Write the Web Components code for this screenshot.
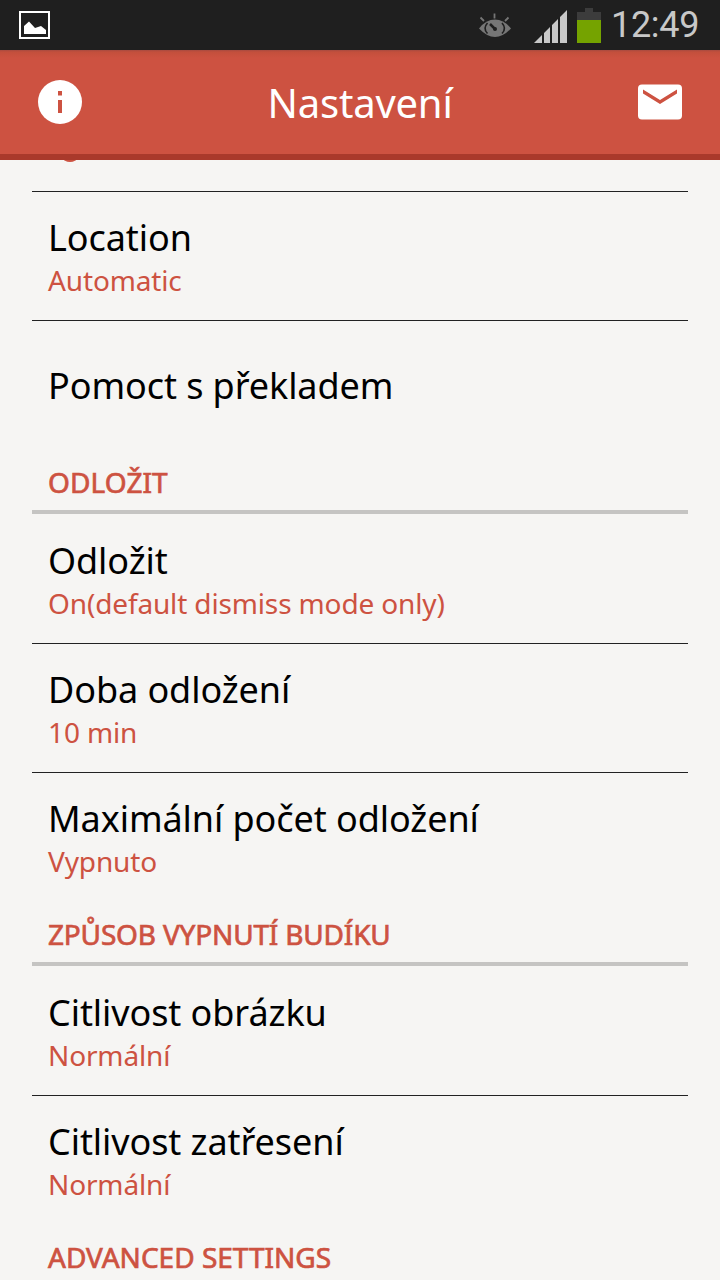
<!DOCTYPE html>
<html lang="cs">
<head>
<meta charset="utf-8">
<title>Nastavení</title>
<style>
  body {
    margin: 0;
    width: 720px;
    height: 1280px;
    overflow: hidden;
    background: #f6f5f3;
    font-family: "Noto Sans", "Open Sans", sans-serif;
  }
</style>
</head>
<body>
<settings-screen>
  <status-bar slot="status" time="12:49"></status-bar>
  <action-bar slot="bar">Nastavení</action-bar>
  <setting-item class="scrolled"></setting-item>
  <setting-item summary="Automatic">Location</setting-item>
  <setting-item last>Pomoct s překladem</setting-item>
  <section-title style="letter-spacing: 0.1px">ODLOŽIT</section-title>
  <setting-item summary="On(default dismiss mode only)">Odložit</setting-item>
  <setting-item summary="10 min">Doba odložení</setting-item>
  <setting-item summary="Vypnuto" last>Maximální počet odložení</setting-item>
  <section-title style="letter-spacing: -0.17px">ZPŮSOB VYPNUTÍ BUDÍKU</section-title>
  <setting-item summary="Normální">Citlivost obrázku</setting-item>
  <setting-item summary="Normální" last>Citlivost zatřesení</setting-item>
  <section-title>ADVANCED SETTINGS</section-title>
</settings-screen>

<script>
class SettingsScreen extends HTMLElement {
  constructor() {
    super();
    this.attachShadow({ mode: "open" });
    this.shadowRoot.innerHTML = `
      <style>
        :host {
          display: flex;
          flex-direction: column;
          height: 1280px;
        }

        .list {
          flex: 1;
          min-height: 0;
          overflow: hidden;
          padding: 0 32px;
        }

        /* the first row is scrolled almost out of view */
        ::slotted(.scrolled) {
          height: 31px;
        }

        .list::before {
          content: "";
          display: block;
          width: 14px;
          height: 8px;
          margin: -6px 0 -2px 31px;
          border-radius: 50%;
          background: #cd5241;
        }
      </style>
      <slot name="status"></slot>
      <slot name="bar"></slot>
      <div class="list"><slot></slot></div>
    `;
  }
}

class StatusBar extends HTMLElement {
  constructor() {
    super();
    this.attachShadow({ mode: "open" });
    this.shadowRoot.innerHTML = `
      <style>
        :host {
          display: flex;
          flex: none;
          align-items: center;
          box-sizing: border-box;
          height: 50px;
          padding: 0 20px 0 18px;
          background: #1f1f1f;
          color: #c8c8c8;
        }

        svg {
          display: block;
          flex: none;
        }

        .right {
          display: flex;
          align-items: center;
          margin-left: auto;
        }

        .signal {
          margin-left: 22px;
        }

        .battery {
          margin-left: 9px;
        }

        .time {
          width: 89px;
          margin-left: 10px;
          font: 400 36px/50px Roboto, sans-serif;
          letter-spacing: -0.3px;
          white-space: nowrap;
        }
      </style>
      <svg width="32" height="50" viewBox="18 0 32 50">
        <rect x="20" y="12" width="29" height="26" fill="none" stroke="#fff" stroke-width="2"/>
        <path d="M24 34V26L29 21.500L35 28L41 26L46 30V34Z" fill="#fff"/>
      </svg>
      <div class="right">
        <svg width="34" height="50" viewBox="478 0 34 50">
          <path d="M479 28.500Q486 19.500 495 19.500T511 28.500Q503 37 495 37T479 28.500Z" fill="#767676"/>
          <path d="M487.500 23Q482.500 28.500 487.500 33.500M502 23Q507 28.500 502 33.500" fill="none" stroke="#1f1f1f" stroke-width="1.600"/>
          <path d="M490 24L495 29" stroke="#1f1f1f" stroke-width="2.500"/>
          <circle cx="495" cy="29" r="2" fill="#1f1f1f"/>
          <path d="M480.500 17.500L484 21M494.500 13.500V18.500M508.500 17.500L505 21" stroke="#767676" stroke-width="1.800"/>
        </svg>
        <svg class="signal" width="34" height="50" viewBox="534 0 34 50">
          <path d="M534 43L542 35V43ZM544 43V33L550 27V43ZM552 43V25L558 19V43ZM560 43V17L567 10V43Z" fill="#c8c8c8"/>
        </svg>
        <svg class="battery" width="24" height="50" viewBox="577 0 24 50">
          <path d="M577 12H585V8H593V12H601V20H577Z" fill="#3c3c3c"/>
          <rect x="577" y="20" width="24" height="23" fill="#75a300"/>
        </svg>
        <span class="time"></span>
      </div>
    `;
  }

  connectedCallback() {
    this.shadowRoot.querySelector(".time").textContent = this.getAttribute("time");
  }
}

class ActionBar extends HTMLElement {
  constructor() {
    super();
    this.attachShadow({ mode: "open" });
    this.shadowRoot.innerHTML = `
      <style>
        :host {
          display: flex;
          flex: none;
          align-items: center;
          justify-content: space-between;
          box-sizing: border-box;
          position: relative;
          z-index: 1;
          height: 110px;
          padding: 0 38px;
          border-bottom: 6px solid #a9392b;
          background: linear-gradient(#a84a40, #c34f3c 2px, #cd5241 8px);
          color: #fff;
          font-size: 40px;
          line-height: 54px;
          letter-spacing: -0.2px;
        }

        svg {
          display: block;
        }

        .title {
          padding-top: 1px;
        }
      </style>
      <svg width="44" height="44" viewBox="0 0 44 44">
        <circle cx="22" cy="22" r="22" fill="#fff"/>
        <path d="M20 11H24V15.500H20ZM20 20H24V33H20Z" fill="#cd5241"/>
      </svg>
      <span class="title"><slot></slot></span>
      <svg width="44" height="44" viewBox="0 0 44 44">
        <rect y="4.500" width="44" height="35" rx="4" fill="#fff"/>
        <path d="M5 9.500L22 20L39 9.500V13.500L22 24L5 13.500Z" fill="#cd5241"/>
      </svg>
    `;
  }
}

class SettingItem extends HTMLElement {
  constructor() {
    super();
    this.attachShadow({ mode: "open" });
    this.shadowRoot.innerHTML = `
      <style>
        :host {
          display: flex;
          flex-direction: column;
          justify-content: center;
          height: 128px;
          padding: 0 16px;
          border-bottom: 1px solid #222;
        }

        :host([last]) {
          border-bottom: none;
        }

        .title {
          color: #000;
          font-size: 36px;
          line-height: 49px;
          letter-spacing: -0.07px;
        }

        .summary {
          margin: -1px 0 1px;
          color: #cd5241;
          font-size: 28px;
          line-height: 38px;
          letter-spacing: -0.14px;
        }

        .summary:empty {
          display: none;
        }
      </style>
      <div class="title"><slot></slot></div>
      <div class="summary"></div>
    `;
  }

  connectedCallback() {
    this.shadowRoot.querySelector(".summary").textContent = this.getAttribute("summary") || "";
  }
}

class SectionTitle extends HTMLElement {
  constructor() {
    super();
    this.attachShadow({ mode: "open" });
    this.shadowRoot.innerHTML = `
      <style>
        :host {
          display: block;
          box-sizing: border-box;
          height: 65px;
          margin-bottom: 1px;
          padding: 14px 16px 0;
          border-bottom: 4px solid #c5c4c2;
          color: #cd5241;
          font-size: 28px;
          line-height: 38px;
          -webkit-text-stroke: 0.7px #cd5241;
        }
      </style>
      <slot></slot>
    `;
  }
}

customElements.define("settings-screen", SettingsScreen);
customElements.define("status-bar", StatusBar);
customElements.define("action-bar", ActionBar);
customElements.define("setting-item", SettingItem);
customElements.define("section-title", SectionTitle);
</script>
</body>
</html>
